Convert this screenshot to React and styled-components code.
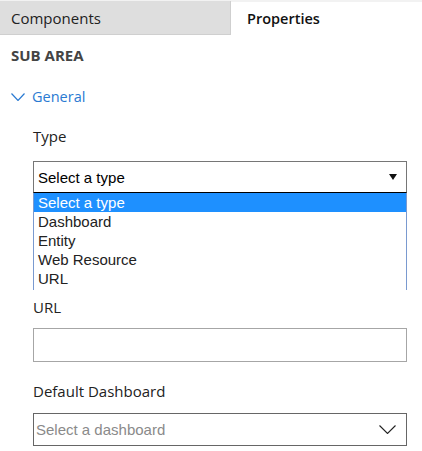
import React from "react";
import styled, { createGlobalStyle } from "styled-components";

const Global = createGlobalStyle`
  html, body { margin: 0; padding: 0; background: #fff; }
  body { font-family: "Open Sans", "Noto Sans", sans-serif; }
  * { box-sizing: border-box; }
`;

const Page = styled.div`
  width: 422px;
  height: 451px;
  overflow: hidden;
  background: #fff;
`;

const TabBar = styled.div`
  display: flex;
  height: 35px;
  border-top: 2px solid #f2f2f2;
`;

const Tab = styled.div`
  display: flex;
  align-items: center;
  height: 33px;
  font-size: ${(p) => (p.$active ? 14.5 : 15)}px;
  color: ${(p) => (p.$active ? "#111" : "#222")};
  font-weight: ${(p) => (p.$active ? 600 : 400)};
  background: ${(p) => (p.$active ? "#fff" : "#dedede")};
  width: ${(p) => p.$width}px;
  padding-left: ${(p) => p.$pad}px;
  border-right: ${(p) => (p.$active ? "none" : "1px solid #cfcfcf")};
  border-bottom: ${(p) => (p.$active ? "none" : "1px solid #cfcfcf")};
  ${(p) => (p.$active ? "" : "margin-top: -1px; height: 34px;")}
`;

const Body = styled.div`
  padding-left: 11px;
`;

const SectionTitle = styled.div`
  margin-top: 10px;
  line-height: 20px;
  font-size: 15px;
  font-weight: 700;
  color: #444;
`;

const Expander = styled.div`
  margin-top: 22px;
  display: flex;
  align-items: center;
  gap: 7px;
  line-height: 20px;
  font-size: 14.5px;
  color: #2a7ad2;
`;

const Fields = styled.div`
  padding-left: 22px;
  width: 396px;
`;

const Label = styled.div`
  margin-top: ${(p) => p.$mt}px;
  line-height: 20px;
  font-size: 15px;
  color: #222;
`;

const SelectWrap = styled.div`
  position: relative;
  margin-top: 15px;
`;

const NativeSelect = styled.div`
  height: 32px;
  border: 1px solid #767676;
  border-bottom-color: #000;
  display: flex;
  align-items: center;
  justify-content: space-between;
  padding: 0 9px 0 4px;
  font-family: "Liberation Sans", Arial, sans-serif;
  font-size: 15px;
  color: #000;
`;

const OptionList = styled.ul`
  position: absolute;
  top: 32px;
  left: 0;
  right: 0;
  height: 97px;
  margin: 0;
  padding: 0;
  list-style: none;
  background: #fff;
  border-left: 1px solid #7a9ad0;
  border-right: 1px solid #7a9ad0;
  z-index: 2;
`;

const Option = styled.li`
  height: 19px;
  line-height: 19px;
  padding-left: 4px;
  font-family: "Liberation Sans", Arial, sans-serif;
  font-size: 15px;
  color: ${(p) => (p.$selected ? "#fff" : "#222")};
  background: ${(p) => (p.$selected ? "#1e90ff" : "transparent")};
`;

const Spacer = styled.div`
  height: ${(p) => p.$h}px;
`;

const TextInput = styled.div`
  margin-top: 11px;
  height: 34px;
  border: 1px solid #a6a6a6;
`;

const DashSelect = styled.div`
  margin-top: 12px;
  height: 33px;
  border: 1px solid #666;
  display: flex;
  align-items: center;
  justify-content: space-between;
  padding: 0 10px 0 2px;
  font-family: "Liberation Sans", Arial, sans-serif;
  font-size: 15px;
  color: #8a8a8a;
`;

const Chevron = ({ w, h, color, sw = 1.2 }) => (
  <svg width={w} height={h} viewBox={`0 0 ${w} ${h}`}>
    <polyline
      points={`0.5,0.5 ${w / 2},${h - 0.5} ${w - 0.5},0.5`}
      fill="none"
      stroke={color}
      strokeWidth={sw}
    />
  </svg>
);

const options = ["Select a type", "Dashboard", "Entity", "Web Resource", "URL"];

export default function App() {
  return (
    <Page>
      <Global />
      <TabBar>
        <Tab $width={231} $pad={11}>Components</Tab>
        <Tab $active $width={191} $pad={16}>Properties</Tab>
      </TabBar>
      <Body>
        <SectionTitle>SUB AREA</SectionTitle>
        <Expander>
          <Chevron w={14} h={8} color="#2a7ad2" />
          <span>General</span>
        </Expander>
        <Fields>
          <Label $mt={19}>Type</Label>
          <SelectWrap>
            <NativeSelect>
              <span>Select a type</span>
              <svg width="8" height="6" viewBox="0 0 8 6">
                <polygon points="0,0 8,0 4,6" fill="#111" />
              </svg>
            </NativeSelect>
            <OptionList>
              {options.map((o, i) => (
                <Option key={o} $selected={i === 0}>
                  {o}
                </Option>
              ))}
            </OptionList>
          </SelectWrap>
          <Spacer $h={104} />
          <Label $mt={0}>URL</Label>
          <TextInput />
          <Label $mt={19}>Default Dashboard</Label>
          <DashSelect>
            <span>Select a dashboard</span>
            <Chevron w={17} h={9} color="#222" sw={1.1} />
          </DashSelect>
        </Fields>
      </Body>
    </Page>
  );
}
